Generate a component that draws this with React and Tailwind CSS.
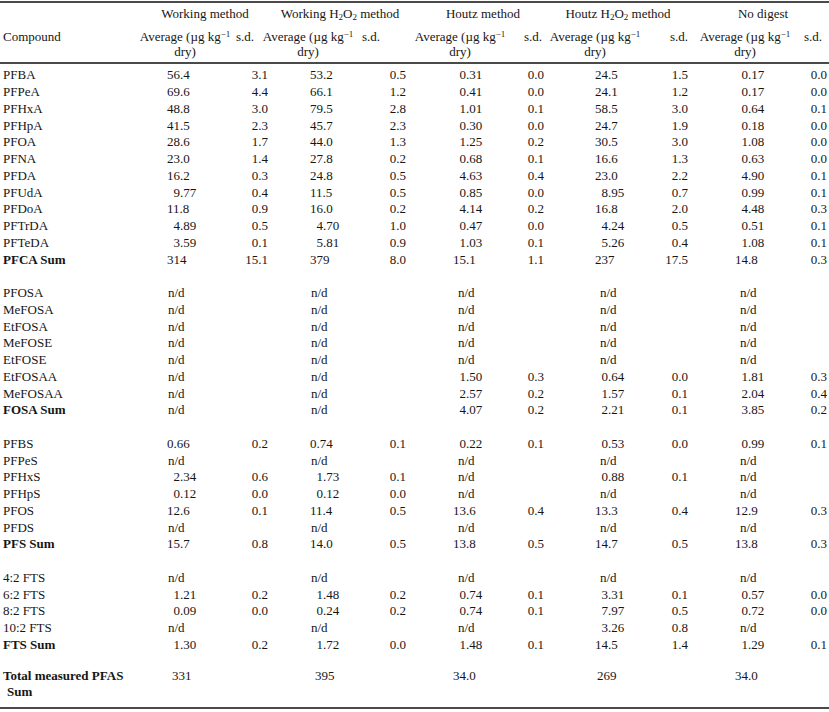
import React from "react";

const groups = [
  { name: <>Working method</>, head: "pl-[14px]", avg: "ml-[7px]", sd: "pr-[14px]" },
  { name: <>Working H<sub className="text-[9px]">2</sub>O<sub className="text-[9px]">2</sub> method</>, head: "pl-[4px]", avg: "-ml-[10px]", sd: "pr-[28px]" },
  { name: <>Houtz method</>, head: "pl-[10px]", avg: "ml-[2px]", sd: "pr-[6px]" },
  { name: <>Houtz H<sub className="text-[9px]">2</sub>O<sub className="text-[9px]">2</sub> method</>, head: "pl-0", avg: "-ml-[3px]", sd: "pr-0" },
  { name: <>No digest</>, head: "pl-[10px]", avg: "ml-[7px]", sd: "pr-[6px]" },
];

// where the average values start in each group, and where s.d. values end
const avgBase = ["pl-[39px]", "pl-[42px]", "pl-[45px]", "pl-[47px]", "pl-[47px]"];
const sdEnd = ["pr-0", "pr-[2px]", "pr-[4px]", "pr-0", "pr-[1px]"];

const shift = {
  0: "ml-0",
  1: "ml-[1px]",
  2: "ml-[2px]",
  5: "ml-[5px]",
  6: "ml-[6.5px]",
};

const rows = [
  ["PFBA", "56.4", "3.1", "53.2", "0.5", "0.31", "0.0", "24.5", "1.5", "0.17", "0.0"],
  ["PFPeA", "69.6", "4.4", "66.1", "1.2", "0.41", "0.0", "24.1", "1.2", "0.17", "0.0"],
  ["PFHxA", "48.8", "3.0", "79.5", "2.8", "1.01", "0.1", "58.5", "3.0", "0.64", "0.1"],
  ["PFHpA", "41.5", "2.3", "45.7", "2.3", "0.30", "0.0", "24.7", "1.9", "0.18", "0.0"],
  ["PFOA", "28.6", "1.7", "44.0", "1.3", "1.25", "0.2", "30.5", "3.0", "1.08", "0.0"],
  ["PFNA", "23.0", "1.4", "27.8", "0.2", "0.68", "0.1", "16.6", "1.3", "0.63", "0.0"],
  ["PFDA", "16.2", "0.3", "24.8", "0.5", "4.63", "0.4", "23.0", "2.2", "4.90", "0.1"],
  ["PFUdA", "9.77", "0.4", "11.5", "0.5", "0.85", "0.0", "8.95", "0.7", "0.99", "0.1"],
  ["PFDoA", "11.8", "0.9", "16.0", "0.2", "4.14", "0.2", "16.8", "2.0", "4.48", "0.3"],
  ["PFTrDA", "4.89", "0.5", "4.70", "1.0", "0.47", "0.0", "4.24", "0.5", "0.51", "0.1"],
  ["PFTeDA", "3.59", "0.1", "5.81", "0.9", "1.03", "0.1", "5.26", "0.4", "1.08", "0.1"],
  ["*PFCA Sum", "314", "15.1", "379", "8.0", "15.1", "1.1", "237", "17.5", "14.8", "0.3"],
  null,
  ["PFOSA", "n/d", "", "n/d", "", "n/d", "", "n/d", "", "n/d", ""],
  ["MeFOSA", "n/d", "", "n/d", "", "n/d", "", "n/d", "", "n/d", ""],
  ["EtFOSA", "n/d", "", "n/d", "", "n/d", "", "n/d", "", "n/d", ""],
  ["MeFOSE", "n/d", "", "n/d", "", "n/d", "", "n/d", "", "n/d", ""],
  ["EtFOSE", "n/d", "", "n/d", "", "n/d", "", "n/d", "", "n/d", ""],
  ["EtFOSAA", "n/d", "", "n/d", "", "1.50", "0.3", "0.64", "0.0", "1.81", "0.3"],
  ["MeFOSAA", "n/d", "", "n/d", "", "2.57", "0.2", "1.57", "0.1", "2.04", "0.4"],
  ["*FOSA Sum", "n/d", "", "n/d", "", "4.07", "0.2", "2.21", "0.1", "3.85", "0.2"],
  null,
  ["PFBS", "<0.66", "0.2", "<0.74", "0.1", "0.22", "0.1", "0.53", "0.0", "0.99", "0.1"],
  ["PFPeS", "n/d", "", "n/d", "", "n/d", "", "n/d", "", "n/d", ""],
  ["PFHxS", "2.34", "0.6", "1.73", "0.1", "n/d", "", "0.88", "0.1", "n/d", ""],
  ["PFHpS", "0.12", "0.0", "0.12", "0.0", "n/d", "", "n/d", "", "n/d", ""],
  ["PFOS", "12.6", "0.1", "11.4", "0.5", "13.6", "0.4", "13.3", "0.4", "12.9", "0.3"],
  ["PFDS", "n/d", "", "n/d", "", "n/d", "", "n/d", "", "n/d", ""],
  ["*PFS Sum", "15.7", "0.8", "14.0", "0.5", "13.8", "0.5", "14.7", "0.5", "13.8", "0.3"],
  null,
  ["4:2 FTS", "n/d", "", "n/d", "", "n/d", "", "n/d", "", "n/d", ""],
  ["6:2 FTS", "1.21", "0.2", "1.48", "0.2", "0.74", "0.1", "3.31", "0.1", "0.57", "0.0"],
  ["8:2 FTS", "0.09", "0.0", "0.24", "0.2", "0.74", "0.1", "7.97", "0.5", "0.72", "0.0"],
  ["10:2 FTS", "n/d", "", "n/d", "", "n/d", "", "3.26", "0.8", "n/d", ""],
  ["*FTS Sum", "1.30", "0.2", "1.72", "0.0", "1.48", "0.1", "14.5", "1.4", "1.29", "0.1"],
];

const total = [">331", ">395", "34.0", ">269", "34.0"];

function avgShift(v, g) {
  if (v.startsWith("<")) return shift[0];
  if (v.startsWith(">")) return g === 3 ? shift[2] : shift[5];
  if (v === "n/d") return g < 2 ? shift[1] : shift[5];
  if (/^\d\./.test(v)) return shift[6];
  return shift[0];
}

function Avg({ v, g }) {
  return <span className={`${avgBase[g]} ${avgShift(v, g)}`}>{v.replace(/^[<>]/, "")}</span>;
}

function DataRow({ row }) {
  const label = row[0];
  const bold = label.startsWith("*");
  return (
    <div className="grid grid-cols-[128px_repeat(5,140px)] h-[16.76px] items-center">
      <div className={`pl-[3px] whitespace-nowrap ${bold ? "font-bold" : ""}`}>{label.replace("*", "")}</div>
      {groups.map((_, g) => (
        <div key={g} className="flex items-center">
          <Avg v={row[1 + g * 2]} g={g} />
          <span className={`ml-auto ${sdEnd[g]}`}>{row[2 + g * 2]}</span>
        </div>
      ))}
    </div>
  );
}

export default function App() {
  return (
    <div className="w-[829px] h-[712px] bg-white text-[#161616] text-[13px] leading-[16px] pt-px" style={{ fontFamily: '"Liberation Serif", "Times New Roman", serif' }}>
      <div className="h-[2px] bg-[#4a4a4a]" />

      {/* group headers */}
      <div className="grid grid-cols-[128px_repeat(5,140px)] h-[22px] items-center">
        <div />
        {groups.map((g, i) => (
          <div key={i} className={`text-center whitespace-nowrap ${g.head}`}>{g.name}</div>
        ))}
      </div>

      {/* sub headers */}
      <div className="grid grid-cols-[128px_repeat(5,140px)] pt-[4px] pb-[3px] leading-[15px]">
        <div className="pl-[3px]">Compound</div>
        {groups.map((g, i) => (
          <div key={i} className="flex items-start">
            <div className={`w-[100px] shrink-0 text-center whitespace-nowrap ${g.avg}`}>
              Average (µg kg<sup className="text-[9px]">−1</sup>
              <br />
              dry)
            </div>
            <span className={`ml-auto ${g.sd}`}>s.d.</span>
          </div>
        ))}
      </div>
      <div className="h-[2px] bg-[#4a4a4a]" />

      <div className="pt-[3px]">
        {rows.map((r, i) =>
          r ? <DataRow key={i} row={r} /> : <div key={i} className="h-[16.76px]" />
        )}
      </div>

      {/* total row */}
      <div className="grid grid-cols-[128px_repeat(5,140px)] pt-[15px] pb-[7px]">
        <div className="pl-[3px] font-bold whitespace-nowrap">
          Total measured PFAS
          <br />
          <span className="pl-[4px]">Sum</span>
        </div>
        {total.map((v, g) => (
          <div key={g} className="flex">
            <Avg v={v} g={g} />
          </div>
        ))}
      </div>
      <div className="h-[2px] bg-[#4a4a4a]" />
    </div>
  );
}
